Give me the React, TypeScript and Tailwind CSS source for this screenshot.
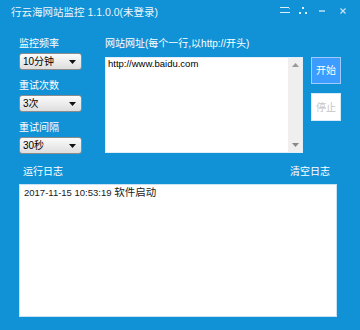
import React from "react";

const ui = { fontFamily: '"Liberation Sans", "Noto Sans CJK SC", sans-serif' };

function Select({ label }: { label: string }) {
  return (
    <div className="mt-px flex h-[17px] w-[63px] items-center justify-between rounded-[3px] border border-[#8c8c8c] bg-gradient-to-b from-[#fbfbfb] to-[#dedede] pl-[3px] pr-[5px]">
      <span className="text-[10px] leading-none text-black">{label}</span>
      <svg width="7" height="4" viewBox="0 0 7 4"><path d="M0 0h7L3.5 4z" fill="#111" /></svg>
    </div>
  );
}

export default function App() {
  return (
    <div className="flex h-[330px] w-[360px] flex-col bg-[#1292d6] text-white" style={ui}>
      <div className="flex h-[25px] items-center justify-between pl-[11px] pr-[14px]">
        <span className="text-[10.5px] leading-none text-white/95">行云海网站监控 1.1.0.0(未登录)</span>
        <div className="-mt-[5px] flex items-center">
          <svg width="10" height="6" viewBox="0 0 10 6">
            <path d="M0 0.5h9M0 5.5h10" stroke="white" strokeOpacity="0.85" strokeWidth="1" />
            <path d="M8.5 0.5l1.5 1.5" stroke="white" strokeOpacity="0.6" strokeWidth="1" />
          </svg>
          <svg width="8" height="7" viewBox="0 0 8 7" className="ml-[9px]">
            <rect x="3" y="0" width="2" height="2" fill="white" fillOpacity="0.85" />
            <rect x="0" y="5" width="2" height="2" fill="white" fillOpacity="0.85" />
            <rect x="6" y="5" width="2" height="2" fill="white" fillOpacity="0.85" />
          </svg>
          <svg width="6" height="2" viewBox="0 0 6 2" className="ml-[12px] mt-[2px]">
            <path d="M0 1h6" stroke="white" strokeOpacity="0.9" strokeWidth="1.2" />
          </svg>
          <svg width="6" height="6" viewBox="0 0 6 6" className="ml-[15px] mt-[2px]">
            <path d="M0.5 0.5l5 5M5.5 0.5l-5 5" stroke="white" strokeOpacity="0.75" strokeWidth="1.2" />
          </svg>
        </div>
      </div>

      <div className="mt-[11px] flex pl-[19px]">
        <div className="flex w-[63px] flex-col">
          <span className="h-[16px] text-[10px] leading-[16px]">监控频率</span>
          <Select label="10分钟" />
          <span className="mt-[8px] h-[16px] text-[10px] leading-[16px]">重试次数</span>
          <Select label="3次" />
          <span className="mt-[8px] h-[16px] text-[10px] leading-[16px]">重试间隔</span>
          <Select label="30秒" />
        </div>

        <div className="ml-[23px] flex w-[198px] flex-col">
          <span className="h-[16px] text-[10px] leading-[16px]">网站网址(每个一行,以http://开头)</span>
          <div className="mt-[5px] flex h-[96px] border border-[#e2eef7] bg-white">
            <div className="flex-1 pl-[2px] text-[9.5px] leading-[11px] text-black">
              http://www.baidu.com
            </div>
            <div className="flex w-[14px] flex-col items-center justify-between bg-[#efefef] py-[5px]">
              <svg width="7" height="4" viewBox="0 0 7 4"><path d="M0 4h7L3.5 0z" fill="#999" /></svg>
              <svg width="7" height="4" viewBox="0 0 7 4"><path d="M0 0h7L3.5 4z" fill="#888" /></svg>
            </div>
          </div>
        </div>

        <div className="ml-[8px] mt-[21px] flex w-[30px] flex-col">
          <div className="flex h-[27px] items-center justify-center border border-[#9fcbff] bg-[#3c9cff] text-[10px] text-white">
            开始
          </div>
          <div className="mt-[9px] flex h-[28px] items-center justify-center border border-[#d6e9fb] bg-white text-[10px] text-[#c4c4c4]">
            停止
          </div>
        </div>
      </div>

      <div className="ml-[19px] mt-[10px] flex w-[318px] flex-col">
        <div className="flex h-[16px] items-center justify-between pl-[4px] pr-[7px] text-[10px] leading-[16px]">
          <span>运行日志</span>
          <span>清空日志</span>
        </div>
        <div className="mt-[4px] h-[133px] border border-[#c8e1f3] bg-white px-[4px] pt-[1px] text-[9.5px] leading-[12px] text-[#1a1a1a]">
          <span>2017-11-15 10:53:19 </span>
          <span className="text-[10.5px]">软件启动</span>
        </div>
      </div>
    </div>
  );
}
